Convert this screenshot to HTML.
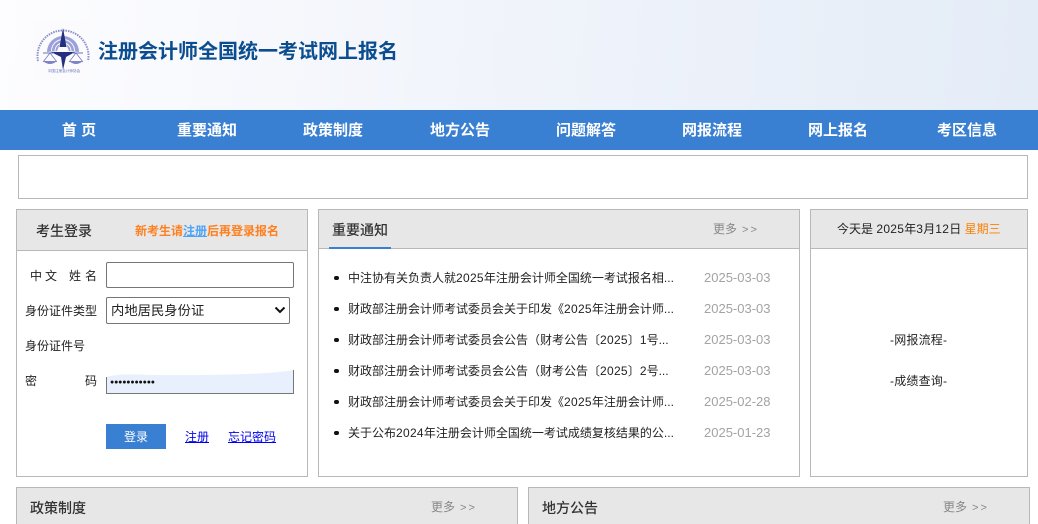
<!DOCTYPE html>
<html lang="zh-CN">
<head>
<meta charset="utf-8">
<title>注册会计师全国统一考试网上报名</title>
<style>
*{box-sizing:border-box;margin:0;padding:0}
html,body{width:1038px;height:524px;overflow:hidden;background:#fff}
body{position:relative;font-family:"Liberation Sans","Noto Sans CJK SC",sans-serif;font-size:12px;color:#222}
.a{position:absolute;white-space:nowrap}
.hdr{left:0;top:0;width:1038px;height:110px;background:linear-gradient(95deg,#fdfdff 0%,#f2f5fb 42%,#e4ecf7 100%)}
.nav{left:0;top:110px;width:1038px;height:40px;background:#397fd2}
.nav span{position:absolute;top:1px;line-height:40px;color:#fff;font-weight:bold;font-size:15px;transform:translateX(-50%);white-space:nowrap}
.box{position:absolute;border:1px solid #b8b8b8;background:#fff}
.bar{position:absolute;left:0;top:0;right:0;background:#e7e7e7;border-bottom:1px solid #b8b8b8}
.t{font-size:14px;font-weight:500;color:#333;line-height:20px}
.more{color:#888;font-size:12px;line-height:16px}
.more b{font-weight:normal;font-size:11px;letter-spacing:2px;margin-left:5px}
.lab{font-size:12px;line-height:16px;color:#222}
.li{left:348px;font-size:12px;line-height:16px;color:#222;width:330px}
.li u{text-decoration:none;letter-spacing:.3px}
.dot{position:absolute;left:334px;width:4.500px;height:4.500px;border-radius:50%;background:#111}
.d{left:704px;font-size:13px;line-height:16px;color:#a3a3a3}
.inp{position:absolute;background:#fff;border:1px solid #767676;border-radius:2px}
</style>
</head>
<body>
<div class="a hdr"></div>
<svg class="a" style="left:33px;top:20px" width="60" height="60" viewBox="0 0 60 60">
<rect width="60" height="60" fill="#fbfbfe"/>
<path d="M5 41A25.500 25.500 0 1 1 55 41" fill="none" stroke="#8a90ca" stroke-width="2" stroke-dasharray="1.500 1"/>
<path d="M14 32A16 16 0 0 1 46 32L36 31L30 16L24 31Z" fill="#9aa0d8"/>
<path d="M18.500 31A11.500 11.500 0 0 1 41.500 31M22 31A8 8 0 0 1 38 31" fill="none" stroke="#fff" stroke-width=".9"/>
<path d="M30 8L33.500 27L26.500 27Z" fill="#23307f"/>
<path d="M18 32L42 32L33 37L30 50L28 37Z" fill="#23307f"/>
<path d="M10 33H21M39 33H50" stroke="#6a72bc" stroke-width="1" fill="none"/>
<path d="M17 33L10 42M17 33L24 42M43 33L36 42M43 33L50 42" stroke="#6a72bc" stroke-width=".7" fill="none"/>
<path d="M10 41H24Q17 47 10 41ZM36 41H50Q43 47 36 41Z" fill="#7d84c6"/>
<text x="31" y="52" font-size="3.600" fill="#6a72bc" text-anchor="middle" font-family="Noto Sans CJK SC,sans-serif">中国注册会计师协会</text>
</svg>
<div class="a" style="left:98px;top:38px;font-size:20px;line-height:28px;font-weight:bold;color:#0b4d8f">注册会计师全国统一考试网上报名</div>
<div class="a nav">
<span style="left:79px">首 页</span><span style="left:207px">重要通知</span><span style="left:333px">政策制度</span><span style="left:460px">地方公告</span><span style="left:586px">问题解答</span><span style="left:712px">网报流程</span><span style="left:838px">网上报名</span><span style="left:967px">考区信息</span>
</div>
<div class="box" style="left:18px;top:155px;width:1010px;height:44px"></div>

<div class="box" style="left:16px;top:209px;width:292px;height:268px"><div class="bar" style="height:41px"></div></div>
<div class="a t" style="left:36px;top:221px">考生登录</div>
<div class="a" style="left:135px;top:222px;font-size:12px;line-height:18px;font-weight:bold;color:#ff7f1e">新考生请<span style="color:#4da3f5;text-decoration:underline">注册</span>后再登录报名</div>
<div class="a lab" style="left:30px;top:268px">中</div>
<div class="a lab" style="left:45px;top:268px">文</div>
<div class="a lab" style="left:69px;top:268px">姓</div>
<div class="a lab" style="left:85px;top:268px">名</div>
<div class="inp" style="left:106px;top:262px;width:188px;height:26px"></div>
<div class="a lab" style="left:25px;top:303px">身份证件类型</div>
<div class="inp" style="left:106px;top:297px;width:184px;height:27px"></div>
<div class="a" style="left:111px;top:302px;font-size:13.330px;line-height:18px;color:#222">内地居民身份证</div>
<svg class="a" style="left:274px;top:306px" width="12" height="8" viewBox="0 0 12 8"><path d="M1.500 1.500L6 6L10.500 1.500" fill="none" stroke="#111" stroke-width="2"/></svg>
<div class="a lab" style="left:25px;top:338px">身份证件号</div>
<div class="a lab" style="left:25px;top:373px">密</div>
<div class="a lab" style="left:85px;top:373px">码</div>
<svg class="a" style="left:106px;top:369px" width="189" height="26" viewBox="0 0 189 26"><path d="M.5 8Q14 4 44 6Q154 7 187.500 1V24.500H.5Z" fill="#e8f0fe"/><path d="M.5 8V24.500H187.500V1" fill="none" stroke="#767676"/></svg>
<div class="a" style="left:110px;top:378px;color:#111;font-size:7px;line-height:10px;letter-spacing:-.15px">●●●●●●●●●●●</div>
<div class="a" style="left:106px;top:424px;width:60px;height:25px;background:#397fd2;color:#fff;text-align:center;line-height:26px;font-size:12px">登录</div>
<div class="a" style="left:185px;top:429px;line-height:16px;color:#00e;text-decoration:underline">注册</div>
<div class="a" style="left:228px;top:429px;line-height:16px;color:#00e;text-decoration:underline">忘记密码</div>

<div class="box" style="left:318px;top:209px;width:482px;height:268px"><div class="bar" style="height:39px"></div></div>
<div class="a t" style="left:332px;top:220px">重要通知</div>
<div class="a" style="left:329px;top:247px;width:62px;height:2px;background:#397fd2"></div>
<div class="a more" style="left:713px;top:221px">更多<b>&gt;&gt;</b></div>

<i class="dot" style="top:275.500px"></i><div class="a li" style="top:270px">中注协有关负责人就<u>2025</u>年注册会计师全国统一考试报名相...</div><div class="a d" style="top:270px">2025-03-03</div>
<i class="dot" style="top:306.500px"></i><div class="a li" style="top:301px">财政部注册会计师考试委员会关于印发《<u>2025</u>年注册会计师...</div><div class="a d" style="top:301px">2025-03-03</div>
<i class="dot" style="top:337.500px"></i><div class="a li" style="top:332px">财政部注册会计师考试委员会公告（财考公告〔<u>2025</u>〕1号...</div><div class="a d" style="top:332px">2025-03-03</div>
<i class="dot" style="top:368.500px"></i><div class="a li" style="top:363px">财政部注册会计师考试委员会公告（财考公告〔<u>2025</u>〕2号...</div><div class="a d" style="top:363px">2025-03-03</div>
<i class="dot" style="top:399.500px"></i><div class="a li" style="top:394px">财政部注册会计师考试委员会关于印发《<u>2025</u>年注册会计师...</div><div class="a d" style="top:394px">2025-02-28</div>
<i class="dot" style="top:430.500px"></i><div class="a li" style="top:425px">关于公布<u>2024</u>年注册会计师全国统一考试成绩复核结果的公...</div><div class="a d" style="top:425px">2025-01-23</div>

<div class="box" style="left:810px;top:209px;width:218px;height:268px"><div class="bar" style="height:39px"></div></div>
<div class="a" style="left:837px;top:221px;line-height:16px;color:#222">今天是 <span style="letter-spacing:.3px">2025</span>年<span style="letter-spacing:.3px">3</span>月<span style="letter-spacing:.3px">12</span>日 <span style="color:#ff7f00">星期三</span></div>
<div class="a lab" style="left:890px;top:332px;letter-spacing:.2px">-网报流程-</div>
<div class="a lab" style="left:890px;top:373px;letter-spacing:.2px">-成绩查询-</div>

<div class="box" style="left:16px;top:487px;width:502px;height:60px"><div class="bar" style="height:41px"></div></div>
<div class="a t" style="left:30px;top:498px">政策制度</div>
<div class="a more" style="left:431px;top:499px">更多<b>&gt;&gt;</b></div>
<div class="box" style="left:528px;top:487px;width:502px;height:60px"><div class="bar" style="height:41px"></div></div>
<div class="a t" style="left:542px;top:498px">地方公告</div>
<div class="a more" style="left:943px;top:499px">更多<b>&gt;&gt;</b></div>
</body>
</html>
